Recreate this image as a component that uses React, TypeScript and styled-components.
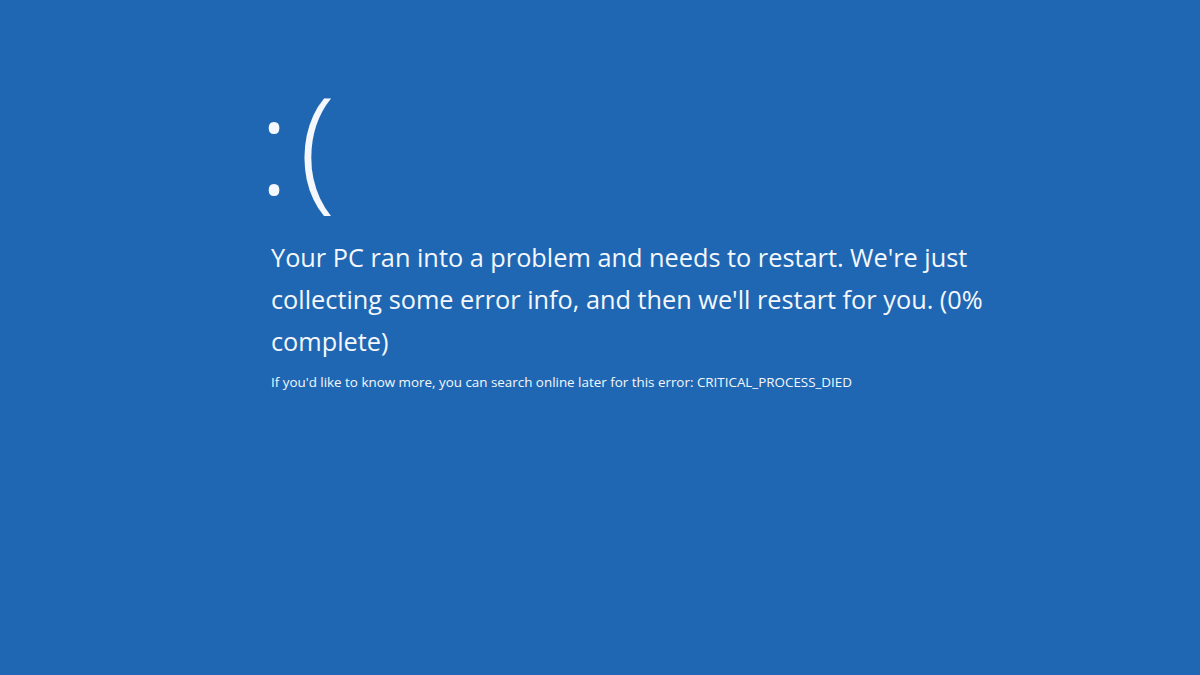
import React from "react";
import styled, { createGlobalStyle } from "styled-components";

const Global = createGlobalStyle`
  html, body { margin: 0; padding: 0; height: 100%; }
  body { background: #2067b3; }
  #root { height: 100%; }
`;

const Screen = styled.div`
  width: 1200px;
  height: 675px;
  background: #2067b3;
  color: #f4f7fb;
  font-family: "Open Sans", "Noto Sans", sans-serif;
  box-sizing: border-box;
  padding: 68px 0 0 271px;
  overflow: hidden;
`;

const Face = styled.div`
  font-size: 134px;
  font-weight: 300;
  line-height: 150px;
  height: 168px;
  margin-left: -13px;
  letter-spacing: 9px;
`;

const Message = styled.p`
  margin: 0;
  width: 722px;
  font-size: 25.3px;
  font-weight: 400;
  line-height: 42px;
`;

const Detail = styled.p`
  margin: 11px 0 0;
  font-size: 13.4px;
  line-height: 18px;
  font-weight: 400;
`;

export default function App() {
  return (
    <Screen>
      <Global />
      <Face>:(</Face>
      <Message>
        Your PC ran into a problem and needs to restart. We're just collecting some error info, and then we'll restart for you. (0% complete)
      </Message>
      <Detail>
        If you'd like to know more, you can search online later for this error: CRITICAL_PROCESS_DIED
      </Detail>
    </Screen>
  );
}
